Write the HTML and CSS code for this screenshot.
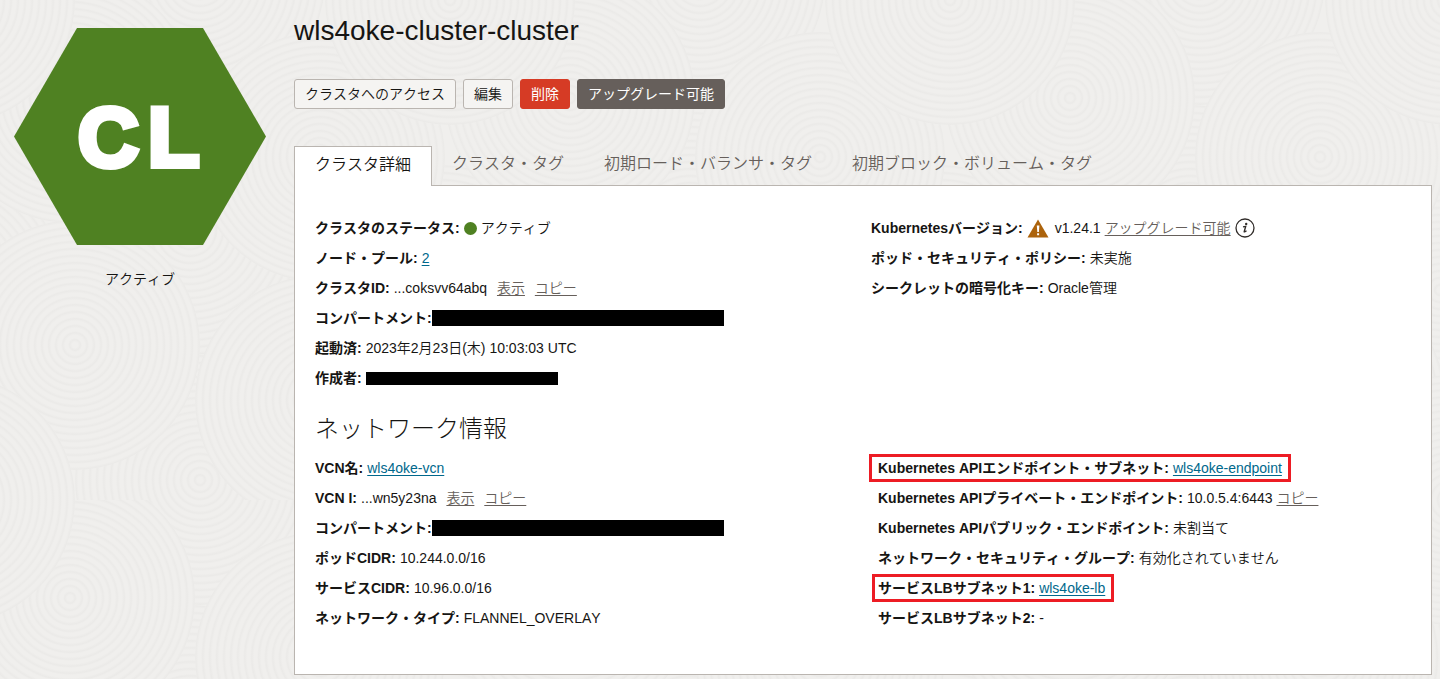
FILE: index.html
```
<!DOCTYPE html>
<html lang="ja">
<head>
<meta charset="UTF-8">
<meta name="viewport" content="width=device-width, initial-scale=1.0">
<title>wls4oke-cluster-cluster</title>
<link rel="stylesheet" href="styles.css">
</head>
<body>

<div class="page">
    <aside class="sidebar">
        <svg class="hexagon" width="252" height="217" viewBox="0 0 252 217">
            <polygon points="63,0 189,0 252,108.5 189,217 63,217 0,108.5" fill="#4f8122"/>
            <text class="hexagon-text" y="138"><tspan x="64">C</tspan><tspan x="134">L</tspan></text>
        </svg>
        <p class="state">アクティブ</p>
    </aside>

    <main class="content">
        <h1>wls4oke-cluster-cluster</h1>

        <div class="actions">
            <button type="button" class="btn">クラスタへのアクセス</button>
            <button type="button" class="btn">編集</button>
            <button type="button" class="btn btn-danger">削除</button>
            <button type="button" class="btn btn-dark">アップグレード可能</button>
        </div>

        <nav class="tabs">
            <a href="#details" class="tab active">クラスタ詳細</a>
            <a href="#tags" class="tab">クラスタ・タグ</a>
            <a href="#lb-tags" class="tab">初期ロード・バランサ・タグ</a>
            <a href="#volume-tags" class="tab">初期ブロック・ボリューム・タグ</a>
        </nav>

        <section class="panel" id="details">
            <div class="columns">
                <dl class="list">
                    <div class="row"><dt>クラスタのステータス:</dt><dd class="status"><span class="dot"></span>アクティブ</dd></div>
                    <div class="row"><dt>ノード・プール:</dt><dd><a href="#pools">2</a></dd></div>
                    <div class="row"><dt>クラスタID:</dt><dd class="ocid">...coksvv64abq <a href="#show" class="muted">表示</a> <a href="#copy" class="muted">コピー</a></dd></div>
                    <div class="row row-joined"><dt>コンパートメント:</dt><dd class="redacted"></dd></div>
                    <div class="row"><dt>起動済:</dt><dd>2023年2月23日(木) 10:03:03 UTC</dd></div>
                    <div class="row"><dt>作成者:</dt><dd class="redacted redacted-short"></dd></div>
                </dl>
                <dl class="list">
                    <div class="row">
                        <dt>Kubernetesバージョン:</dt>
                        <dd class="version">
                            <svg class="warning" width="22" height="19" viewBox="0 0 22 19">
                                <path d="M11 0.5 L21.5 18.5 H0.5 Z" fill="#ac630c"/>
                                <path d="M9.8 6.5 h2.6 l-0.5 6.5 h-1.6 z M10.1 14.2 h2 v2 h-2 z" fill="#fff"/>
                            </svg>
                            <span>v1.24.1</span>
                            <a href="#upgrade" class="muted">アップグレード可能</a>
                            <svg class="info" width="20" height="20" viewBox="0 0 20 20">
                                <circle cx="10" cy="10" r="9" fill="none" stroke="#312d2a" stroke-width="1.3"/>
                                <circle cx="11.2" cy="5.9" r="1.2" fill="#312d2a"/>
                                <path d="M8 8.9 L10.7 8.4 L9.2 13.6 Q9 14.5 11.5 12.7" fill="none" stroke="#312d2a" stroke-width="1.4"/>
                            </svg>
                        </dd>
                    </div>
                    <div class="row"><dt>ポッド・セキュリティ・ポリシー:</dt><dd>未実施</dd></div>
                    <div class="row"><dt>シークレットの暗号化キー:</dt><dd>Oracle管理</dd></div>
                </dl>
            </div>

            <h2>ネットワーク情報</h2>

            <div class="columns">
                <dl class="list">
                    <div class="row"><dt>VCN名:</dt><dd><a href="#vcn">wls4oke-vcn</a></dd></div>
                    <div class="row"><dt>VCN I:</dt><dd class="ocid">...wn5y23na <a href="#show-vcn" class="muted">表示</a> <a href="#copy-vcn" class="muted">コピー</a></dd></div>
                    <div class="row row-joined"><dt>コンパートメント:</dt><dd class="redacted"></dd></div>
                    <div class="row"><dt>ポッドCIDR:</dt><dd>10.244.0.0/16</dd></div>
                    <div class="row"><dt>サービスCIDR:</dt><dd>10.96.0.0/16</dd></div>
                    <div class="row"><dt>ネットワーク・タイプ:</dt><dd>FLANNEL_OVERLAY</dd></div>
                </dl>
                <dl class="list list-indent">
                    <div class="row marked"><dt>Kubernetes APIエンドポイント・サブネット:</dt><dd><a href="#endpoint">wls4oke-endpoint</a></dd></div>
                    <div class="row"><dt>Kubernetes APIプライベート・エンドポイント:</dt><dd>10.0.5.4:6443 <a href="#copy-endpoint" class="muted">コピー</a></dd></div>
                    <div class="row"><dt>Kubernetes APIパブリック・エンドポイント:</dt><dd>未割当て</dd></div>
                    <div class="row"><dt>ネットワーク・セキュリティ・グループ:</dt><dd>有効化されていません</dd></div>
                    <div class="row marked marked-tight"><dt>サービスLBサブネット1:</dt><dd><a href="#lb">wls4oke-lb</a></dd></div>
                    <div class="row"><dt>サービスLBサブネット2:</dt><dd>-</dd></div>
                </dl>
            </div>
        </section>
    </main>
</div>

</body>
</html>
```
FILE: styles.css
```
* {
    box-sizing: border-box;
}
body {
    margin: 0;
    color: #161513;
    font-family: "Liberation Sans", "Noto Sans CJK JP", sans-serif;
    font-size: 14px;
    font-weight: 350;
    font-kerning: none;
    line-height: 20px;
    background-color: #f0efed;
    /* swirl texture: overlapping discs filled with concentric rings */
    background-image: url("data:image/svg+xml,%3Csvg xmlns='http://www.w3.org/2000/svg' xmlns:xlink='http://www.w3.org/1999/xlink' width='500' height='500'%3E%3Cdefs%3E%3CradialGradient id='g' gradientUnits='userSpaceOnUse' cx='0' cy='0' r='7' spreadMethod='repeat'%3E%3Cstop offset='0' stop-color='%23f0efed'/%3E%3Cstop offset='.4' stop-color='%23f0efed'/%3E%3Cstop offset='.75' stop-color='%23ebeae8'/%3E%3Cstop offset='1' stop-color='%23f0efed'/%3E%3C/radialGradient%3E%3Ccircle id='c' r='125' fill='url(%23g)'/%3E%3C/defs%3E%3Cg id='t'%3E%3Cuse xlink:href='%23c' x='190' y='230'/%3E%3Cuse xlink:href='%23c' x='440' y='290'/%3E%3Cuse xlink:href='%23c' x='-60' y='290'/%3E%3Cuse xlink:href='%23c' x='200' y='480'/%3E%3Cuse xlink:href='%23c' x='200' y='-20'/%3E%3Cuse xlink:href='%23c' x='70' y='98'/%3E%3Cuse xlink:href='%23c' x='570' y='98'/%3E%3Cuse xlink:href='%23c' x='320' y='157'/%3E%3Cuse xlink:href='%23c' x='75' y='345'/%3E%3Cuse xlink:href='%23c' x='575' y='345'/%3E%3Cuse xlink:href='%23c' x='320' y='400'/%3E%3Cuse xlink:href='%23c' x='450' y='500'/%3E%3Cuse xlink:href='%23c' x='450' y='0'/%3E%3Cuse xlink:href='%23c' x='-50' y='500'/%3E%3Cuse xlink:href='%23c' x='-50' y='0'/%3E%3C/g%3E%3C/svg%3E");
}
.page {
    display: flex;
    gap: 14px;
    padding: 0 8px 4px 0;
}
.sidebar {
    flex: 0 0 280px;
    padding-top: 28px;
    text-align: center;
}
.hexagon {
    display: block;
    margin: 0 auto;
}
.hexagon-text {
    font-family: "Liberation Sans", sans-serif;
    font-weight: bold;
    font-size: 84px;
    fill: #fff;
    stroke: #fff;
    stroke-width: 6px;
}
.state {
    margin: 24px 0 0;
}
.content {
    flex: 1;
    min-width: 0;
}
h1 {
    margin: 15px 0 32px;
    font-size: 28px;
    line-height: 32px;
    font-weight: normal;
}
.actions {
    display: flex;
    gap: 7px;
    margin-bottom: 37px;
}
.btn {
    height: 30px;
    padding: 0 10px 2px;
    border: 1px solid #bab5b0;
    border-radius: 3px;
    background-color: #f5f4f2;
    color: #161513;
    font-family: inherit;
    font-size: 14px;
    font-weight: inherit;
    font-kerning: none;
    cursor: pointer;
}
.btn-danger,
.btn-dark {
    color: #fff;
    font-weight: normal;
}
.btn-danger {
    background-color: #d63b25;
    border-color: #d63b25;
}
.btn-dark {
    background-color: #665f5b;
    border-color: #665f5b;
}
a {
    color: #00688c;
    text-underline-offset: 2px;
}
a.muted {
    color: #665f5b;
}
.tabs {
    display: flex;
}
.tab {
    padding: 6px 20px 0;
    height: 39px;
    color: #665f5b;
    font-size: 16px;
    line-height: 24px;
    text-decoration: none;
}
.tab.active {
    height: 40px;
    margin-bottom: -1px;
    border: 1px solid #bab5b0;
    border-bottom: none;
    background-color: #fff;
    color: #161513;
    z-index: 1;
}
.panel {
    padding: 27px 20px 41px;
    border: 1px solid #bab5b0;
    background-color: #fff;
}
.columns {
    display: grid;
    grid-template-columns: 1fr 1fr;
    gap: 16px;
}
.list {
    margin: 0;
}
.list-indent {
    padding-left: 7px;
}
.row {
    display: flex;
    align-items: center;
    gap: 4px;
    height: 30px;
    white-space: nowrap;
}
.row-joined {
    gap: 0;
}
dt {
    font-weight: bold;
}
dd {
    margin: 0;
}
.ocid a {
    margin-left: 6px;
}
.status,
.version {
    display: flex;
    align-items: center;
    gap: 4px;
}
.warning {
    margin-right: 2px;
}
.dot {
    width: 13px;
    height: 13px;
    border-radius: 50%;
    background-color: #4f8122;
}
.redacted {
    width: 292px;
    height: 16px;
    background-color: #000;
}
.redacted-short {
    width: 192px;
    height: 13px;
}
h2 {
    margin: 20px 0 8px;
    font-size: 24px;
    line-height: 32px;
    font-weight: 300;
}
.marked {
    width: fit-content;
    height: 28px;
    margin: 1px 0 1px -9px;
    padding: 0 6px;
    border: 3px solid #ed1c24;
}
.marked-tight {
    margin-left: -6px;
    padding-left: 3px;
}
```
